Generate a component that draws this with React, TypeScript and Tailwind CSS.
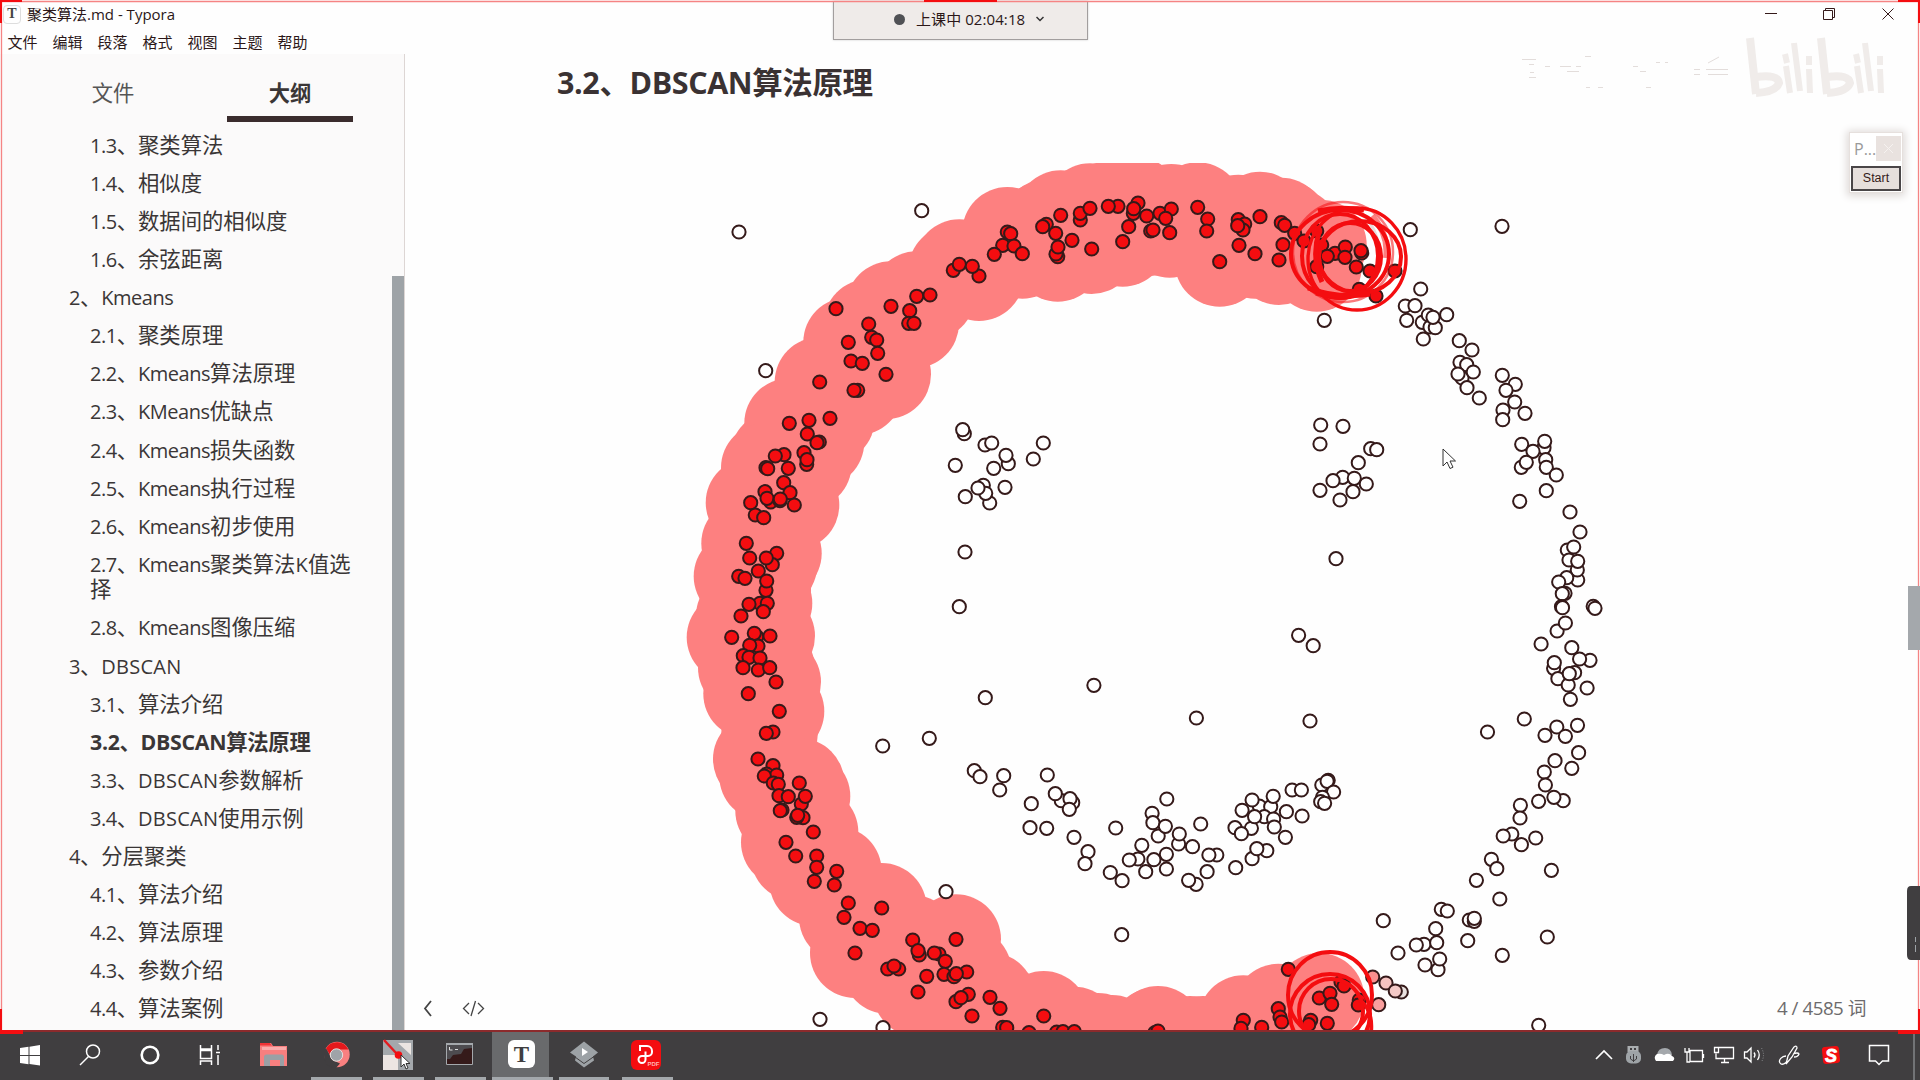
import React from "react";

type Pt = [number, number];

const CORE: Pt[] = [
  [868.7, 324], [871.7, 337.3], [876.7, 340], [848.3, 342.3], [877.7, 353.3], [851, 361], [862.3, 363.3],
  [886, 374.3], [819.7, 382], [857.7, 390.3], [854, 390.3], [891, 306.3], [916.7, 296.3], [930, 295], [909.7, 310.7],
  [908.7, 323.3], [914, 323.3], [953.3, 270.3], [959.3, 264.3], [979, 276], [972.3, 266.3], [1007.3, 232], [1010.7, 233.7],
  [1002.7, 245.3], [1014, 246], [994.3, 254.3], [1022.3, 253.7], [1046.3, 224.3], [1042.7, 226.7], [1055.7, 233.3],
  [1060.7, 215.3], [1080.3, 220], [1080.3, 213.3], [1090, 208.3], [1072, 240.3], [1057.7, 256.7], [1056, 254], [1058, 247],
  [1091.7, 249], [789.3, 423.3], [809, 420.3], [830, 418.3], [807.3, 434], [819.3, 442], [817, 442.7], [784, 454.7],
  [775.3, 456], [804, 452.7], [806.7, 464.3], [807, 459.7], [766, 467.7], [767.7, 468.7], [788.3, 468.3], [783.7, 482.7],
  [790, 492.7], [765, 491.7], [770.7, 502], [767, 498.3], [780, 500.7], [780.3, 499], [794.3, 505], [750.7, 502.7],
  [755.3, 515], [763.7, 517.7], [1118, 206.3], [1108.3, 206.3], [1138, 203], [1133.3, 213.3], [1133.7, 208.7],
  [1160, 213.3], [1171.3, 209], [1146.7, 216], [1165.7, 218.3], [1128.7, 226.7], [1150.7, 231], [1153, 230],
  [1169.7, 232.7], [1122.7, 241.7], [1197.7, 207.3], [1207.7, 219], [1206.7, 231], [1219.7, 261.7], [1238.3, 219.7],
  [1244.7, 224], [1243, 230], [1237.7, 225.7], [1260, 216.7], [1239, 245.3], [1255, 253.7], [1281.3, 222.7],
  [1284.7, 225.3], [1283, 244.7], [1279, 260], [1294.7, 233.3], [1304, 241], [1321.7, 245], [1316.7, 266.7],
  [746.3, 543.3], [749.7, 558], [776.7, 553.3], [772.3, 564.7], [766.3, 558], [738.7, 576.3], [758.3, 571], [745, 578.3],
  [766, 590.3], [766.7, 581], [760, 603.3], [767.3, 603.3], [749, 604.3], [763.3, 611.7], [741, 616], [731.7, 637.3],
  [756.7, 636.7], [754.3, 633.3], [770, 636], [758, 646], [749.7, 645.3], [743.3, 655.7], [749, 657.3], [760, 658],
  [743, 667.7], [758.3, 670], [769.7, 667.7], [776, 682], [748.3, 693.7], [779.3, 711.3], [773, 732], [766.3, 733.3],
  [758, 759], [773, 765.7], [766.7, 774], [776.7, 775], [764.3, 776], [773.3, 783], [778.3, 784.3], [799.3, 783],
  [779, 795.7], [788.3, 796.7], [801.3, 804], [805.3, 796.3], [782, 810], [780.3, 810.7], [803, 817.7], [796.7, 817.3],
  [797.7, 815.3], [813.3, 832], [786, 842.3], [795.7, 856], [816.7, 856], [816.7, 867.3], [814.3, 881.3], [836.7, 871.3],
  [834.3, 885], [848.3, 903], [844, 917.3], [881.7, 908], [860, 928.3], [872.3, 930.3], [855, 953], [912.7, 940],
  [919.3, 955], [918, 950.7], [956, 939.3], [939, 954], [934.3, 953], [945.3, 961.3], [887.7, 969], [898.7, 969], [894, 966],
  [926.7, 976.3], [918, 992], [944, 974.3], [954, 976.7], [966.7, 972], [956.3, 973.7], [956, 1001.7], [968.3, 994.3],
  [961, 997.7], [990, 997.3], [1000, 1008.3], [972, 1016], [1002.7, 1027.3], [1006.7, 1027.7], [1043.7, 1016],
  [1029, 1032.7], [1056.7, 1032], [1063, 1031.7], [1074.3, 1031.7], [1155, 1032.5], [1158, 1031],
  [1278.3, 1008.7], [1280, 1017], [1281.7, 1022], [1261.7, 1027.3], [1243.3, 1020.3], [1241, 1028.3], [1319.3, 998],
  [1098, 1038], [1112, 1040], [1190, 1041], [1203, 1041],
];

const EDGE: Pt[] = [
  [836, 308.7], [1316.7, 231], [1335, 253.3], [1327.3, 256.3], [1345.3, 247], [1345, 257.3], [1361.7, 253], [1361, 250.7],
  [1356.3, 267], [1370, 271], [1395, 271], [1359.3, 289.3], [1376, 296], [1288.3, 969.3], [1330, 993.3], [1331.7, 1004.3],
  [1341, 982], [1344, 986], [1359.3, 1000], [1358.3, 1005], [1310.7, 1020.3], [1308.7, 1024.7], [1327.3, 1023.3],
];

const FADING: [number, number, string][] = [
  [1372.7, 977, "#fa8f8e"], [1386, 983, "#f6c3c0"], [1401.3, 992, "#e9e1df"], [1395.3, 991, "#f4c9c6"], [1378.7, 1004.7, "#f99e9d"],
];

const OPEN: Pt[] = [
  [739, 232], [921.7, 210.7], [765.7, 370.7], [964.3, 433.7], [962.7, 429.7], [985, 445], [991.7, 443], [1008.3, 463.7],
  [1006, 455.3], [993.7, 468.3], [955.3, 465.3], [1043.3, 443], [1033.3, 459], [1005, 487.3], [983.3, 485.3], [989.7, 503],
  [985.7, 493.3], [978, 488], [965.3, 496.7], [1410.3, 229.7], [1324.3, 320.3], [1502, 226.3], [1420.7, 289],
  [1405.3, 306], [1415, 305.7], [1406.7, 320.3], [1422.3, 322.3], [1428.3, 315], [1430, 327], [1435.3, 327.7],
  [1446.7, 314.7], [1433, 317.3], [1423.3, 339], [1459.3, 340.7], [1472, 350], [1460, 362.3], [1466.7, 364.7],
  [1462, 378], [1473.3, 372], [1458, 374], [1467, 387.7], [1479.3, 398], [1502.3, 375.3], [1515.3, 384.3],
  [1506, 390.3], [1514.7, 402], [1503, 410], [1525, 413.3], [1502.7, 419.7], [1521.7, 444.3], [1544, 447.7],
  [1544.7, 441.3], [1533, 451.3], [1521.3, 467.3], [1526.3, 462.3], [1545.7, 459.7], [1546.3, 467.3], [1556.3, 475],
  [1546.3, 490.7], [1519.7, 501.3], [1570, 512], [1580, 532], [1567.3, 550], [1573.7, 547], [1569, 560],
  [1577.7, 580], [1577.3, 570], [1577.7, 561.3], [1566.7, 577.7], [1558.7, 582], [1565, 593.3], [1562.3, 593.7],
  [1320.7, 425], [1343, 426.3], [1320, 444], [1370.7, 448.7], [1376.7, 449.7], [1358.3, 462.7], [1342.7, 477.3],
  [1333, 480.7], [1320, 490.3], [1354.3, 478.3], [1366.3, 484], [1353, 491.7], [1340, 500], [1336, 558.7],
  [965, 552], [959.3, 606.7], [985.3, 697.7], [929.3, 738.3], [882.7, 746], [974.3, 770.7], [980, 776.7], [1003.7, 775.7],
  [999.7, 790], [1047.3, 775], [1031.3, 803.7], [1061.3, 800.7], [1055.3, 793.7], [1072.7, 802.7], [1070, 798.7],
  [1069.3, 809.3], [1030, 827.7], [1046.7, 828.3], [946, 891.7], [820, 1019.3], [883, 1027.7], [1074, 837.3],
  [1088, 851.7], [1085, 863.7], [1110.3, 872.5], [1121.7, 934.7], [1093.9, 685.3], [1196.4, 718], [1310, 721],
  [1298.6, 635.3], [1313.2, 645.7], [1115.7, 828], [1122.1, 880.7], [1166.8, 799], [1152.1, 813.3], [1152.9, 822.7],
  [1200.7, 824], [1158.2, 836], [1165.4, 826.3], [1178.6, 844], [1179.3, 834], [1192.5, 846.7], [1141.8, 845.3],
  [1137.9, 859], [1129.3, 860], [1166.4, 854.3], [1153.9, 859.7], [1145.7, 871.7], [1166.4, 869], [1216.8, 855],
  [1208.9, 855], [1207.1, 871.7], [1196.1, 884.3], [1188.6, 880.3], [1235.7, 867.7], [1252.1, 858.7], [1266.8, 850.7],
  [1256.8, 848.7], [1285.4, 837.3], [1235, 827.7], [1251.4, 828.3], [1241.4, 833.7], [1242.1, 810.3], [1259.3, 806],
  [1252.1, 800], [1270.7, 806.7], [1273.2, 796.3], [1264.3, 816.7], [1254.6, 816.7], [1273.6, 819], [1274.3, 827],
  [1286.4, 811.7], [1302.1, 816], [1292.1, 790], [1301.4, 790], [1321.8, 785], [1328.2, 780.3], [1327.1, 781.3],
  [1333.6, 792], [1322.5, 797.3], [1320.7, 801.7], [1324.6, 803.3], [1593.2, 606.3], [1595, 608.3], [1561.5, 606.7],
  [1562.5, 607.7], [1557.1, 631], [1565.4, 623], [1541.1, 644], [1571.8, 647.7], [1590, 660.3], [1579.6, 659],
  [1553.6, 668.3], [1554.3, 662.7], [1557.9, 678.7], [1574.6, 672.7], [1568.2, 685], [1569.3, 673.7], [1587.1, 688],
  [1570.4, 699.3], [1524.3, 719], [1487.5, 732], [1545, 735.3], [1556.8, 727], [1565.4, 736.3], [1577.5, 725.3],
  [1578.6, 752.7], [1571.8, 768.3], [1555, 760.7], [1544.3, 772], [1545.4, 785], [1563.2, 800.7], [1553.9, 797.3],
  [1538.6, 801.3], [1520.4, 805.3], [1520, 818], [1511.8, 834], [1503.2, 836], [1535.7, 838], [1521.4, 844.7],
  [1491.4, 859.3], [1496.8, 868.7], [1476.4, 880.3], [1551.4, 870.3], [1499.8, 899], [1383.3, 920.7], [1441.3, 909.3],
  [1447.3, 911], [1469.3, 920], [1474.3, 921.3], [1474.3, 918.3], [1435.7, 928.7], [1467.7, 940.7], [1547.3, 937],
  [1502.3, 955.3], [1424, 944.3], [1416.3, 945], [1436.7, 942.7], [1398, 953], [1425, 965], [1438, 969.7],
  [1439.7, 959], [1538.7, 1025.3],
];

const Dot = ({ p, fill }: { p: Pt; fill: string }) => (
  <circle cx={p[0]} cy={p[1]} r={6.6} fill={fill} stroke="#351a1a" strokeWidth={2} />
);

function Scatter() {
  return (
    <svg className="block h-[868px] w-full" viewBox="405 163 1515 868">
      {CORE.map((p, i) => (
        <circle key={i} cx={p[0]} cy={p[1]} r={45} fill="#fd8080" />
      ))}
      {OPEN.map((p, i) => <Dot key={i} p={p} fill="#ffffff" />)}
      {FADING.map((f, i) => <Dot key={i} p={[f[0], f[1]]} fill={f[2]} />)}
      {CORE.map((p, i) => <Dot key={i} p={p} fill="#f40d10" />)}
      {EDGE.map((p, i) => <Dot key={i} p={p} fill="#f40d10" />)}
      <g fill="none" stroke="#f40d10" strokeWidth={4}>
        <path d="M1372 216q17 18 14 42" stroke="#fd8080" strokeWidth={6} />
        <path d="M1366 218q16 18 12 46" stroke="#e6dfdd" strokeWidth={3} />
        <circle cx={1343} cy={252} r={50} strokeWidth={2.5} opacity={0.55} />
        <ellipse cx={1340} cy={254} rx={49} ry={44} />
        <ellipse cx={1340} cy={256} rx={38} ry={42} />
        <ellipse cx={1357} cy={259} rx={49} ry={51} strokeWidth={3.4} />
        <ellipse cx={1350} cy={257} rx={31} ry={34} />
        <ellipse cx={1360} cy={257} rx={41} ry={36} />
        <path d="M1308 288q30 11 62 6M1316 293q26 6 50-2M1319 232q-8 26 3 50" strokeWidth={5} />
        <path d="M1318 211q22-5 46-1" strokeWidth={5} />
        <ellipse cx={1330} cy={995} rx={42} ry={43} />
        <circle cx={1330} cy={1014} r={40} />
        <circle cx={1331} cy={1011} r={32} />
        <path d="M1360 1000Q1373 1010 1371 1032" />
      </g>
      <path d="M1443 449v17l4-4 3 6.500 3-1.300-3-6.200h5.500z" fill="#fff" stroke="#333" strokeWidth={1} />
    </svg>
  );
}

const OUTLINE: { t: string; lvl: number; on?: boolean }[] = [
  { t: "1.3、聚类算法", lvl: 2 },
  { t: "1.4、相似度", lvl: 2 },
  { t: "1.5、数据间的相似度", lvl: 2 },
  { t: "1.6、余弦距离", lvl: 2 },
  { t: "2、Kmeans", lvl: 1 },
  { t: "2.1、聚类原理", lvl: 2 },
  { t: "2.2、Kmeans算法原理", lvl: 2 },
  { t: "2.3、KMeans优缺点", lvl: 2 },
  { t: "2.4、Kmeans损失函数", lvl: 2 },
  { t: "2.5、Kmeans执行过程", lvl: 2 },
  { t: "2.6、Kmeans初步使用", lvl: 2 },
  { t: "2.7、Kmeans聚类算法K值选择", lvl: 2 },
  { t: "2.8、Kmeans图像压缩", lvl: 2 },
  { t: "3、DBSCAN", lvl: 1 },
  { t: "3.1、算法介绍", lvl: 2 },
  { t: "3.2、DBSCAN算法原理", lvl: 2, on: true },
  { t: "3.3、DBSCAN参数解析", lvl: 2 },
  { t: "3.4、DBSCAN使用示例", lvl: 2 },
  { t: "4、分层聚类", lvl: 1 },
  { t: "4.1、算法介绍", lvl: 2 },
  { t: "4.2、算法原理", lvl: 2 },
  { t: "4.3、参数介绍", lvl: 2 },
  { t: "4.4、算法案例", lvl: 2 },
];

/* Latin runs are set slightly smaller and tighter than the Chinese text around them. */
const Label = ({ t }: { t: string }) => (
  <>
    {t.split(/([0-9A-Za-z.]+)/).map((run, i) =>
      /[0-9A-Za-z]/.test(run) ? (
        <span
          key={i}
          className={
            /[a-z0-9]/.test(run)
              ? "text-[20px] leading-[16px] tracking-[-0.480px]"
              : "text-[20px] leading-[16px] tracking-[0.250px]"
          }
        >
          {run}
        </span>
      ) : (
        run
      ),
    )}
  </>
);

function Sidebar() {
  return (
    <aside className="flex h-full w-[405px] shrink-0 overflow-hidden border-r border-[#ddd6d4] bg-[#fbfafa] text-[#3a3636]">
      <div className="w-[392px]">
        <div className="flex gap-[51px] pl-[50px] text-center text-[21.3px] leading-[32px]">
          <div className="h-[68px] w-[126px] pt-[23px] text-[#555]">文件</div>
          <div className="h-[68px] w-[126px] border-b-[6px] border-[#3a2c2d] pt-[23px] font-bold">大纲</div>
        </div>
        <ul className="pt-[3.500px] text-[21.33px] leading-[25.6px]">
          {OUTLINE.map((o) => (
            <li
              key={o.t}
              className={
                (o.lvl === 1 ? "pl-[69px] " : "pl-[90px] ") +
                (o.on ? "font-bold tracking-[-0.300px] " : "") +
                "break-all py-[6.250px] pr-[36px]"
              }
            >
              {o.on ? o.t : <Label t={o.t} />}
            </li>
          ))}
        </ul>
      </div>
      <div className="mt-[222px] w-[12px] bg-[#9ea3a7]" />
    </aside>
  );
}

function Watermark() {
  return (
    <svg className="absolute left-[1520px] top-[34px] h-[66px] w-[370px]" viewBox="1520 34 370 66" fill="none" stroke="#f0ecea" strokeWidth={8}>
      {[0, 71].map((dx) => (
        <g key={dx} transform={`translate(${dx} 0)`}>
          <path d="M1750 38l6 56" />
          <path d="M1756 77q22-3 23 6q-3 9-23 10" />
          <path d="M1794 43l6 48" strokeWidth={6} />
          <path d="M1786 66l4 27M1785 54l2 9" strokeWidth={6} />
          <path d="M1809 69l1 24M1809 56v9" strokeWidth={6} />
        </g>
      ))}
      <path
        strokeWidth={1}
        stroke="#e3dddb"
        d="M1522 59.500h14M1529 64.500h5M1530 72.500h4M1529 77.500h7M1545 66.500h5M1560 66.500h11M1576 66.500h5M1585 56.500h6M1567 71.500h12M1633 66.500h5M1640 71.500h6M1656 62.500h4M1665 62.500h3M1694 69.500h6M1706 69.500h22M1694 74.500h6M1708 74.500h20M1586 87.500h4M1598 87.500h5M1646 87.500h5M1708 63l11-6"
      />
    </svg>
  );
}

function TitleBar() {
  return (
    <header className="h-[54px] pt-[4px] text-[#2b1718]">
      <div className="flex h-[20px] items-center">
        <span className="ml-[3px] flex h-[19px] w-[18px] items-center justify-center rounded border border-[#ddd] font-['Liberation_Serif',serif] text-[14px] font-bold leading-none text-[#444]">T</span>
        <span className="ml-[6px] text-[15px] leading-5">聚类算法.md - Typora</span>
        <svg className="ml-auto mr-[20px] h-[18px] w-[140px]" viewBox="1760 5 140 18" fill="none" stroke="#351a1a">
          <path d="M1765 13.500h12M1823.500 10.500h9v9h-9zM1825.500 10v-1.500h9v9h-2M1882.500 8.500l11 11M1893.500 8.500l-11 11" />
        </svg>
      </div>
      <nav className="flex gap-[15px] pl-[7.500px] pt-[8px] text-[15px] leading-5">
        {["文件", "编辑", "段落", "格式", "视图", "主题", "帮助"].map((m) => (
          <span key={m}>{m}</span>
        ))}
      </nav>
    </header>
  );
}

function ClassTimer() {
  return (
    <div className="absolute left-[833px] top-[1px] flex h-[39px] w-[255px] items-center border border-t-0 border-[#a29e9e] bg-[#efebe9] pb-[2px] pl-[60px] text-[15px] text-[#2b1718] shadow-[0_0_2px_#ccc]">
      <span className="mr-[11px] size-[11px] rounded-full bg-[#505155]" />
      <span className="tracking-[0.080px]">上课中 02:04:18</span>
      <svg className="ml-[11px] h-[6px] w-[8px]" viewBox="0 0 8 6" fill="none" stroke="#333" strokeWidth={1.500}>
        <path d="M.5 1L4 4.500 7.500 1" />
      </svg>
    </div>
  );
}

function StartPanel() {
  return (
    <div className="absolute left-[1849px] top-[132px] w-[54px] border border-[#e6e0dd] bg-white p-px pt-[3px] shadow-[0_1px_8px_2px_#ddd8d6]">
      <div className="flex h-[25px] items-center justify-between">
        <span className="pl-[3px] text-[16px] text-[#999]">P...</span>
        <span className="flex size-[25px] items-center justify-center bg-[#e9e2df]">
          <svg className="size-[9px]" viewBox="0 0 9 9" stroke="#f6f2f0">
            <path d="M0 0l9 9M9 0L0 9" />
          </svg>
        </span>
      </div>
      <div className="mt-[5px] flex h-[25px] items-center justify-center border-2 border-[#4a4648] bg-[#e6dfdc] font-['Liberation_Sans',sans-serif] text-[12.500px] text-[#351a1a]">Start</div>
    </div>
  );
}

function WindowFrame() {
  return (
    <svg className="pointer-events-none absolute inset-0 h-[1036px] w-[1920px]" viewBox="0 0 1920 1036" fill="none">
      <path stroke="#f58484" strokeWidth={1.300} d="M1.500 1030V1.500h1917V1030" />
      <path fill="#8c2a2c" d="M0 1030h1920v2H0z" />
      <path fill="#f40d10" d="M0 0h22v2H2v21H0zM1920 0h-22v2h20v21h2zM924 0h73v2h-73zM0 1009h2v21h21v4H0zM1920 1009h-2v21h-20v4h22z" />
      <path fill="#a4a8ac" d="M1908 586h12v64h-12z" />
      <path fill="#403e40" d="M1920 886h-9q-4 0-4 5v64q0 5 4 5h9z" />
      <path fill="#9ea3a7" d="M1915 937h1v5h-1zM1915 945h1v7h-1z" />
    </svg>
  );
}

function Taskbar() {
  return (
    <footer className="relative h-[49px] bg-[#403e40]">
      <svg className="block h-[49px] w-[1920px]" viewBox="0 1031 1920 49" fill="none">
        <path fill="#fff" d="M20 1048l8.500-1.200v8.200H20zM29.500 1046.700l10.500-1.700v10H29.500zM20 1056h8.500v8.200L20 1063zM29.500 1056H40v9.500l-10.500-1.500z" />
        <g stroke="#fff" strokeWidth={1.500}>
          <circle cx={93} cy={1051.500} r={6.500} />
          <path d="M88.500 1056.500L80 1065" />
          <circle cx={150} cy={1055} r={8.300} strokeWidth={2.600} />
          <path d="M200.500 1045v4h11v-4M200.500 1065v-4h11v4M200.500 1050.500h11v8h-11zM218 1045v5M218 1055v10M216 1052.500h4" />
        </g>
        <path fill="#f87f7f" d="M260 1043h11l2 3h14v20h-27z" />
        <path fill="#ee3336" d="M260 1043h10l2 2.500h-12z" />
        <path fill="#9aa0a5" d="M264 1066v-9q0-2.500 2.500-2.500h15q2.500 0 2.500 2.500v9h-4v-6h-10v6z" />
        <path fill="#fff" opacity={0.35} d="M262 1047h24v3h-24z" />
        <circle cx={337} cy={1054.500} r={12.700} fill="#f98080" />
        <path fill="#e5181c" d="M326 1048.500a12.700 12.700 0 0 1 22.500 1h-11.500l-7 5z" />
        <path fill="#403e40" d="M324 1049l2.500 0 6 11 7.500 3.500-4 4.500q-12-1-12-13z" />
        <circle cx={336.500} cy={1055} r={6.200} fill="#9fa3a8" stroke="#e8e0de" />
        <path fill="#a4a8ac" d="M383 1040h30v30h-30z" />
        <path fill="#ece5e2" d="M383 1055h15v15h-15zM398 1043h13v12z" />
        <path stroke="#e31b1f" strokeWidth={2.500} d="M384 1040l13 14" />
        <circle cx={398.500} cy={1055} r={3.800} fill="#f40d10" />
        <path fill="#fff" stroke="#333" d="M401 1055v12l3-3 2 5 2-1-2-4.500h4z" />
        <path fill="#351a1a" stroke="#a4a8ac" d="M446.500 1043.500h26v21h-26z" />
        <path stroke="#a4a8ac" strokeWidth={2} d="M446 1044h27" />
        <path fill="#4d4b4f" d="M447 1045h25v3l-8 1-3 5-8 1-3 4h-3z" />
        <path stroke="#ddd" d="M449.500 1047v3h3M455 1049.500h3" />
        <path fill="#696a6c" d="M492 1031h57v49h-57z" />
        <rect x={508} y={1040} width={27} height={28} rx={6} fill="#fff" />
        <path fill="#9da2a6" d="M584 1041.500l14 11-5 4 1 4-10 7-9-7 1-4-6-4z" />
        <path stroke="#403e40" d="M575 1057l9 6.500 10-7" />
        <path fill="#fff" d="M582 1048l6 4-6 4z" />
        <rect x={631} y={1040} width={30} height={30} rx={6} fill="#f40d10" />
        <path stroke="#fff" strokeWidth={2} d="M640 1051v-5h7a5 5 0 0 1 5 5v1a4 4 0 0 1-4 4h-6a3.500 3.500 0 1 0 3.500 3.500v-8" />
        <path fill="#a4a8ac" d="M311 1077h51v3h-51zM373 1077h51v3h-51zM435 1077h51v3h-51zM492 1077h61v3h-61zM559 1077h50v3h-50zM622 1077h51v3h-51z" />
        <g stroke="#fff" strokeWidth={1.300}>
          <path strokeWidth={1.700} d="M1596 1059l8-8 8 8" />
          <path d="M1690 1050.500h12.500v11H1690zM1703.500 1054v4M1685 1048v4h4v-4M1687 1052v10h3" />
          <path d="M1719 1047.500h14.500v11H1716v-5M1724.500 1059v3M1721 1062.500h8M1714.500 1047.500h4v5h-4z" />
          <path d="M1744.500 1052h2.500l4-4v14l-4-4h-2.500zM1754 1052.500q2 2.500 0 5M1757.500 1050q3.500 5 0 10" />
          <path d="M1786 1064l2-8 6-9q3-2 3 1l-5 9zM1786 1056c-4 0-8 4-6 7s6 0 7-2M1793 1054q5-2 6 0-1 3-5 3" />
          <path strokeWidth={1.500} d="M1869.500 1045.500h19v15.500h-6l-3.500 3.500-3.500-3.500h-6z" />
        </g>
        <path stroke="#8d8f92" strokeDasharray="1 1.500" d="M1761.500 1048q4 7 0 14" />
        <path fill="#aaadb0" d="M1627.500 1046h11v6h-11z" />
        <path fill="#403e40" d="M1630 1048h2v2h-2zM1634 1048h2v2h-2z" />
        <rect x={1626} y={1051} width={15} height={12.500} rx={5} fill="#9ea3a7" />
        <path stroke="#403e40" d="M1633.500 1054v8M1630.500 1056v3l3 2 3-2v-3" />
        <path fill="#a4a8ac" d="M1657 1055q1-7 8-7 6 0 7 7l-6 4z" />
        <path fill="#fff" d="M1656 1061q-3-4 1-7 4-1 7 1 5-3 8 1 4 2 1 5z" />
        <rect x={1822.500} y={1046.500} width={17} height={17} rx={3} fill="#f40d10" transform="rotate(-6 1831 1055)" />
        <path fill="#a4a8ac" d="M1913.500 1034h1v46h-1z" />
        <g textAnchor="middle" fontWeight={700}>
          <text x={521.5} y={1062} fontSize={23} fill="#403e40" className="font-['Liberation_Serif',serif]">T</text>
          <text x={653.5} y={1066} fontSize={6} fill="#ffb3b3" className="font-['Liberation_Sans',sans-serif]">PDF</text>
          <text x={1831} y={1061.500} fontSize={18} fill="#fff" stroke="#fff" strokeWidth={0.8} fontStyle="italic" className="font-['Liberation_Sans',sans-serif]">S</text>
        </g>
      </svg>
    </footer>
  );
}

export default function App() {
  return (
    <div className="relative flex h-[1080px] w-[1920px] flex-col overflow-hidden bg-[#fefefe] font-['Open_Sans','Noto_Sans_CJK_SC',sans-serif]">
      <TitleBar />
      <div className="flex h-[977px]">
        <Sidebar />
        <main className="relative min-w-0 flex-1">
          <h1 className="h-[109px] pl-[152px] pt-[5.500px] text-[30.500px] font-bold leading-[44px] tracking-[-0.400px] text-[#3a3233]">3.2、DBSCAN算法原理</h1>
          <Scatter />
          <div className="absolute inset-x-0 bottom-[9px] flex items-center justify-between pl-[17px] pr-[54px]">
            <svg className="h-[20px] w-[64px]" viewBox="422 998 64 20" fill="none" stroke="#444">
              <path strokeWidth={1.800} d="M431 1001l-6 7.500 6 7.500" />
              <path strokeWidth={1.300} d="M469 1003l-5.500 5.500 5.500 5.500M478 1003l5.500 5.500-5.500 5.500M475.500 1001l-4.500 15" />
            </svg>
            <span className="text-[18.700px] leading-[28px] tracking-[-0.450px] text-[#6d6b6c]">4 / 4585 词</span>
          </div>
        </main>
      </div>
      <Taskbar />
      <Watermark />
      <StartPanel />
      <ClassTimer />
      <WindowFrame />
    </div>
  );
}
